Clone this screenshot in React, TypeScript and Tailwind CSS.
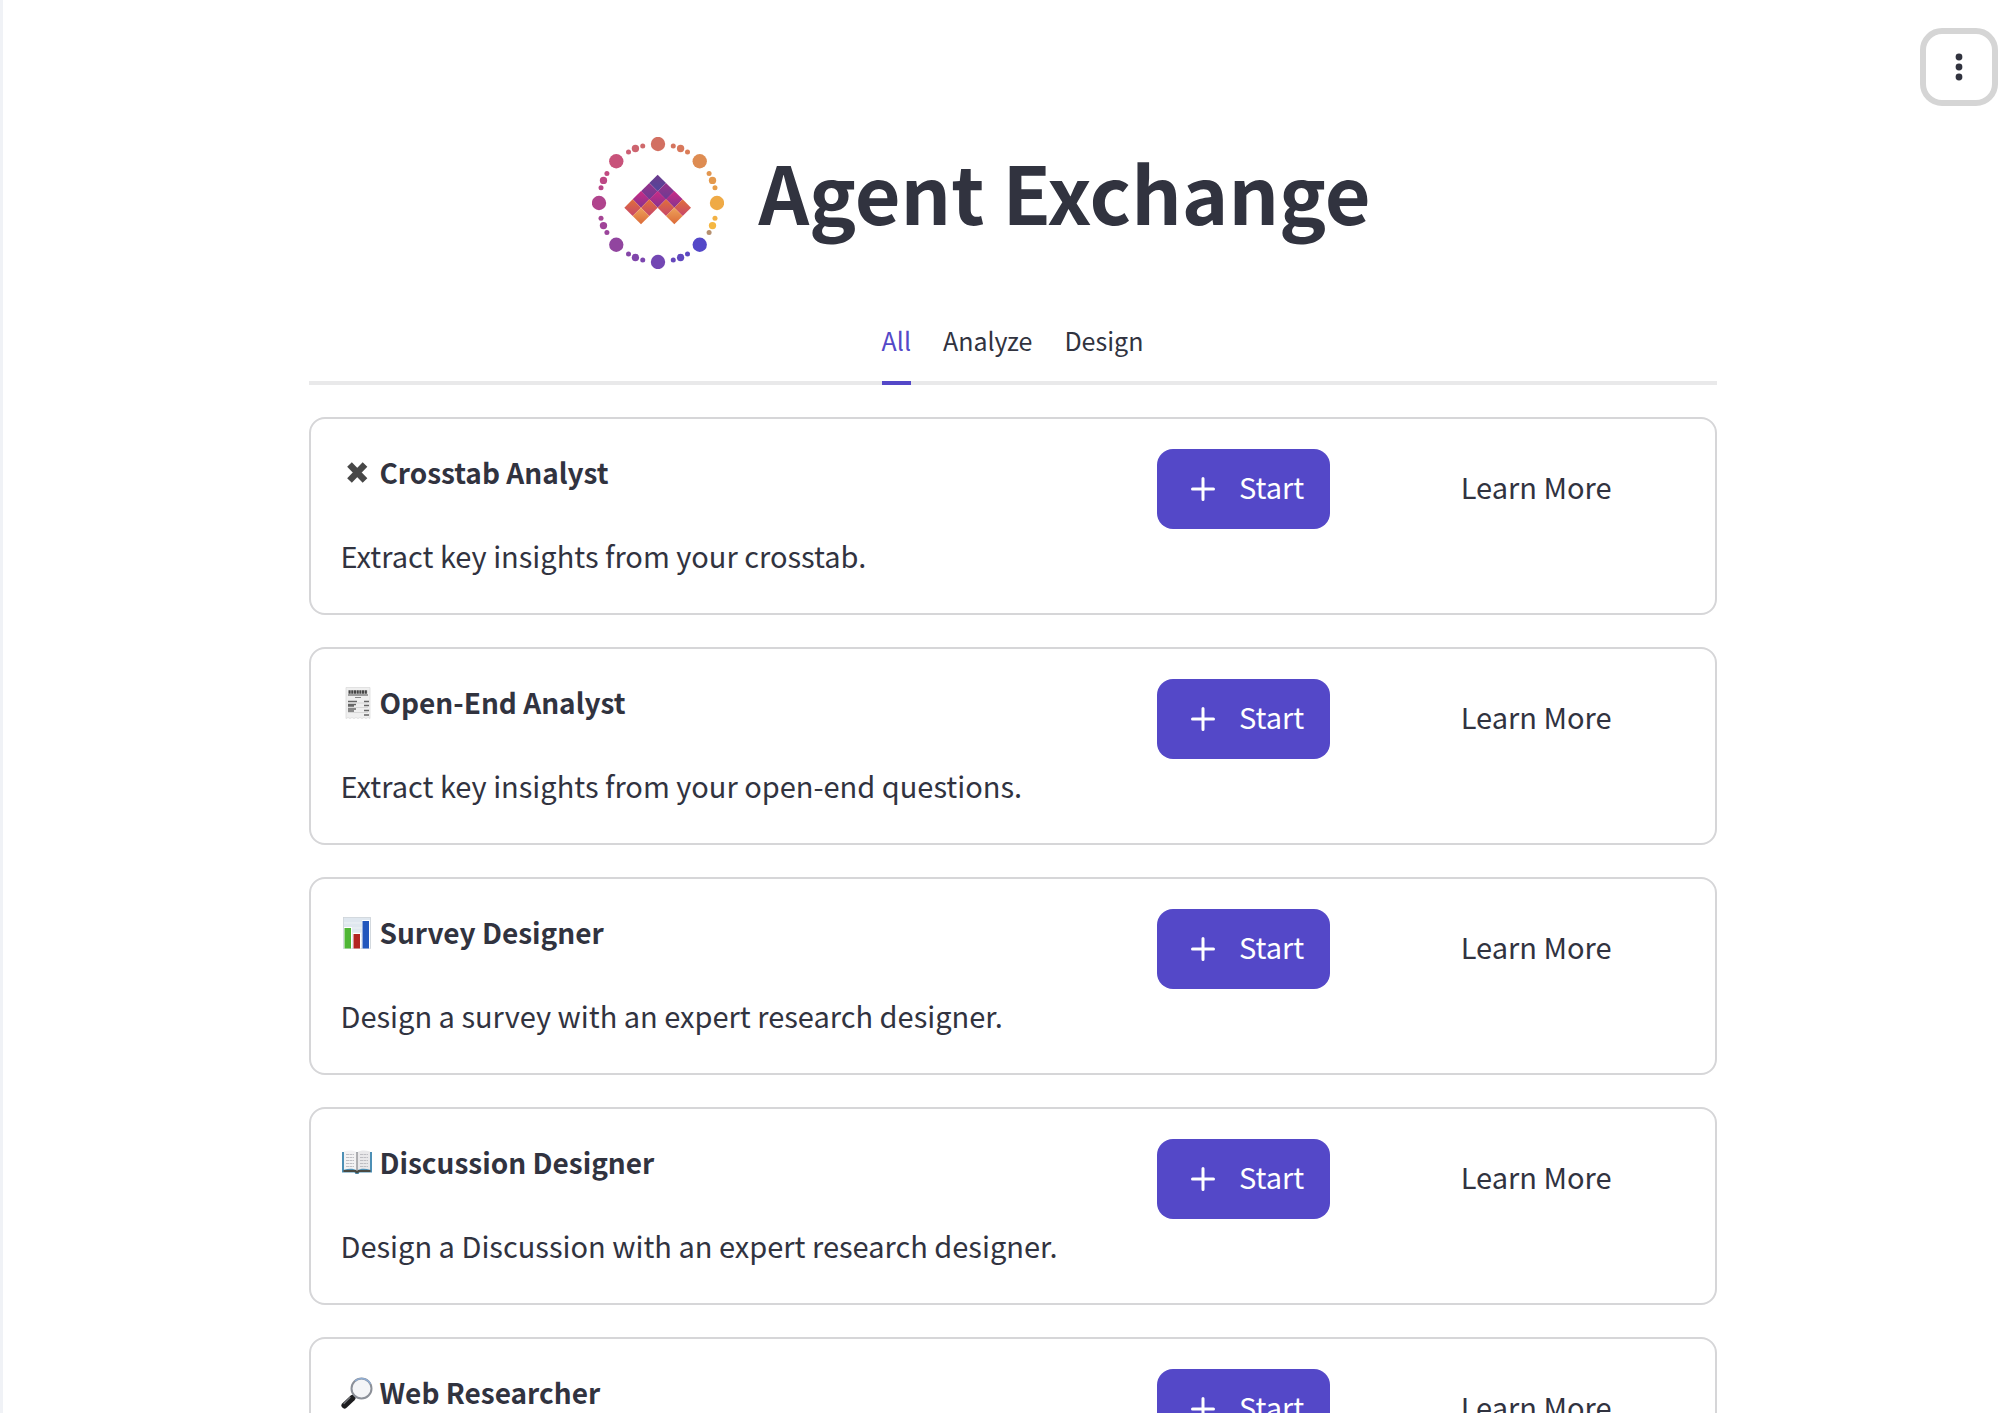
import React, { useState } from 'react';

type Category = 'Analyze' | 'Design';

interface Agent {
    name: string;
    description?: string;
    category: Category;
    icon: React.ReactNode;
}

const CrossIcon = () => (
    <svg viewBox="0 0 32 32" className="size-8 shrink-0" aria-hidden="true">
        <path d="M8.500 7.500 24 23.500M24 7.500 8.500 23.500" stroke="#474747" strokeWidth="6.500" fill="none" />
    </svg>
);

const ReceiptIcon = () => (
    <svg viewBox="0 0 32 32" className="size-8 shrink-0" aria-hidden="true">
        <path d="M5 0.5h24v31l-2-1-2 1-2-1-2 1-2-1-2 1-2-1-2 1-2-1-2 1-2-1-2 1z" fill="#efefef" stroke="#dcdcdc" strokeWidth="0.8" />
        <path d="M7.500 5h19" stroke="#444" strokeWidth="3.600" strokeDasharray="2.200 0.500" />
        <path d="M7 8h20" stroke="#666" strokeWidth="1.200" />
        <path d="M14 10.500h6" stroke="#888" strokeWidth="1" />
        <path d="M7 14.500h9M23 14.500h5M7 17.500h8M7 19h6M23 18.500h5M7 22h8M7 24h6M23 23.500h5M23 28h5" stroke="#666" strokeWidth="1.300" />
        <path d="M7 16h20M7 20.500h20M7 25.500h20" stroke="#ccc" strokeWidth="0.7" />
    </svg>
);

const ChartIcon = () => (
    <svg viewBox="0 0 32 32" className="size-8 shrink-0" aria-hidden="true">
        <rect x="2.500" y="0.5" width="27" height="31" fill="#dfe7ef" stroke="#cdd3d8" strokeWidth="0.8" />
        <path d="M3 6h26M3 11h26M3 16h26M3 21h26M3 26h26" stroke="#eef2f6" strokeWidth="1" />
        <rect x="3" y="10" width="8" height="21.5" fill="#fff" />
        <rect x="12" y="16" width="8" height="15.5" fill="#fff" />
        <rect x="21" y="3" width="8" height="28.5" fill="#fff" />
        <rect x="3.500" y="11" width="6.500" height="20.5" fill="#4fb635" />
        <rect x="12.500" y="17" width="6.500" height="14.5" fill="#b32421" />
        <rect x="21.500" y="4" width="6.500" height="27.5" fill="#2357bd" />
    </svg>
);

const BookIcon = () => (
    <svg viewBox="0 0 32 32" className="size-8 shrink-0" aria-hidden="true">
        <path d="M1 5h30v20.500H18.5l-1 1.500h-3l-1-1.500H1z" fill="#4c8fb5" />
        <path d="M2.5 23h27v2H18l-1 1.200h-2l-1-1.200H2.500z" fill="#4a4a42" />
        <path d="M3 4.500c5-1.500 10-1.200 13 1v18c-3-2-8-2.200-13-0.800z" fill="#f3f2f3" />
        <path d="M29 4.500c-5-1.500-10-1.200-13 1v18c3-2 8-2.200 13-0.800z" fill="#e9e8ea" />
        <path d="M16 5v19" stroke="#8b8b8f" strokeWidth="1.3" />
        <path d="M5 7.500h8M5 10.500h8M5 13.500h8M5 16.500h8M5 19.500h8M19 7.500h8M19 10.500h8M19 13.500h8M19 16.500h8M19 19.500h8" stroke="#b9b9be" strokeWidth="0.9" strokeDasharray="3 0.500" />
    </svg>
);

const MagnifierIcon = () => (
    <svg viewBox="0 0 32 32" className="size-8 shrink-0" aria-hidden="true">
        <path d="M10 21.500l4.500-4.500" stroke="#777" strokeWidth="2.500" />
        <path d="M3.500 28.500l8-7.500" stroke="#1d1d1f" strokeWidth="6" strokeLinecap="round" />
        <path d="M3 26.500l6-6" stroke="#75787c" strokeWidth="1.200" strokeLinecap="round" />
        <circle cx="20.500" cy="11.500" r="10" fill="#f4f5f7" stroke="#8c9098" strokeWidth="2" />
        <path d="M14 4a10 10 0 0 1 15.500 3" stroke="#8fadd3" strokeWidth="1.500" fill="none" />
    </svg>
);

const agents: Agent[] = [
    {
        name: 'Crosstab Analyst',
        description: 'Extract key insights from your crosstab.',
        category: 'Analyze',
        icon: <CrossIcon />,
    },
    {
        name: 'Open-End Analyst',
        description: 'Extract key insights from your open-end questions.',
        category: 'Analyze',
        icon: <ReceiptIcon />,
    },
    {
        name: 'Survey Designer',
        description: 'Design a survey with an expert research designer.',
        category: 'Design',
        icon: <ChartIcon />,
    },
    {
        name: 'Discussion Designer',
        description: 'Design a Discussion with an expert research designer.',
        category: 'Design',
        icon: <BookIcon />,
    },
    {
        name: 'Web Researcher',
        category: 'Analyze',
        icon: <MagnifierIcon />,
    },
];

// Clockwise from the top: one big dot, then three small ones
const ringColors = [
    ['#d27062', '#d5755f', '#d8785c', '#db7d58'],
    ['#de8c52', '#e2964f', '#e4994d', '#e79e4b'],
    ['#efaa46', '#f2b144', '#f5b742', '#b6906f'],
    ['#5448c8', '#5c48c2', '#6048be', '#6647bb'],
    ['#7347b3', '#7c46af', '#8046ab', '#8546a8'],
    ['#91459f', '#9b459b', '#a04498', '#a54494'],
    ['#b0448d', '#b94688', '#bd4985', '#c14b82'],
    ['#c8527a', '#cc5f74', '#cd646f', '#cf696b'],
];

// Diamonds of the mountain: centre x, centre y, row
const tiles = [
    [233, 174, 0],
    [208, 199, 1], [258, 199, 1],
    [183, 223, 2], [233, 223, 2], [283, 223, 2],
    [158, 248, 3], [208, 248, 3], [258, 248, 3], [308, 248, 3],
    [183, 273, 4], [283, 273, 4],
];

const tileColors = [
    ['#6d3a8c', '#50479c'],
    ['#98328a', '#6b3b94'],
    ['#cb2a85', '#85348f'],
    ['#e06f3a', '#c8466a'],
    ['#eda25a', '#dc6a38'],
];

const Logo = () => (
    <svg viewBox="36 36 396 396" className="size-[132px] shrink-0" role="img" aria-label="Agent Exchange logo">
        <defs>
            {tileColors.map(([from, to], row) => (
                <linearGradient key={row} id={`tile-${row}`} x1="0" y1="0" x2="0" y2="1">
                    <stop offset="0" stopColor={from} />
                    <stop offset="1" stopColor={to} />
                </linearGradient>
            ))}
        </defs>
        {ringColors.map((colors, i) =>
            colors.map((color, j) => {
                const offset = [0, 15, 22.5, 30][j];
                const angle = ((i * 45 + offset) * Math.PI) / 180;
                return (
                    <circle
                        key={`${i}-${j}`}
                        cx={234 + 177 * Math.sin(angle)}
                        cy={234 - 177 * Math.cos(angle)}
                        r={[21.5, 7.5, 11, 7.5][j]}
                        fill={color}
                    />
                );
            })
        )}
        {tiles.map(([x, y, row]) => (
            <path key={`${x}-${y}`} d={`M${x} ${y - 25}l25 25-25 25-25-25z`} fill={`url(#tile-${row})`} />
        ))}
    </svg>
);

const AgentCard: React.FC<{ agent: Agent }> = ({ agent }) => (
    <article className="grid grid-cols-[19fr_6fr_6fr] items-start gap-8 rounded-2xl border-2 border-[#d6d6d8] px-[30px] pt-[30px] pb-[34px]">
        <div className="flex flex-col gap-9 leading-[47px]">
            <h2 className="flex items-center gap-[7px] text-[28px] font-bold">
                {agent.icon}
                {agent.name}
            </h2>
            <p className="min-h-[47px]">{agent.description}</p>
        </div>
        <div>
            <button type="button" className="flex h-20 items-center gap-4 rounded-2xl bg-[#5448c8] px-[26px] text-white">
                <svg viewBox="0 0 40 40" className="size-10" aria-hidden="true">
                    <path d="M20 9.500v21M9.500 20h21" stroke="currentColor" strokeWidth="3" strokeLinecap="round" />
                </svg>
                <span className="pb-1">Start</span>
            </button>
        </div>
        <div>
            <button type="button" className="flex h-20 items-center px-6">
                <span className="pb-1">Learn More</span>
            </button>
        </div>
    </article>
);

const App = () => {
    const [tab, setTab] = useState<'All' | Category>('All');
    const visible = agents.filter((agent) => tab === 'All' || agent.category === tab);

    return (
        <div className="h-screen overflow-hidden border-l-3 border-[#f0f2f6] bg-white font-['Noto_Sans_CJK_SC','Noto_Sans',sans-serif] text-[29px] text-[#31333f]">
            <header className="flex justify-end pt-7 pr-4">
                <button
                    type="button"
                    aria-label="Main menu"
                    className="flex size-[78px] items-center justify-center rounded-[22px] border-6 border-[#d5d5d5]"
                >
                    <svg viewBox="0 0 40 40" className="size-10" fill="currentColor" aria-hidden="true">
                        <circle cx="20" cy="10" r="3.400" />
                        <circle cx="20" cy="20" r="3.400" />
                        <circle cx="20" cy="30" r="3.400" />
                    </svg>
                </button>
            </header>

            <main className="mx-auto max-w-[1416px] pt-[31px] pl-2">
                <div className="flex items-center justify-center gap-[34px] pr-[62px]">
                    <Logo />
                    <h1 className="pb-6 text-[79px] leading-[108px] font-bold">Agent Exchange</h1>
                </div>

                <div role="tablist" className="mt-8 flex justify-center gap-8 text-[25px] leading-10 shadow-[inset_0_-4px_#e9e9ea]">
                    {(['All', 'Analyze', 'Design'] as const).map((label) => (
                        <button
                            key={label}
                            type="button"
                            role="tab"
                            aria-selected={tab === label}
                            onClick={() => setTab(label)}
                            className={`border-b-4 pt-[19px] pb-[21px] ${tab === label ? 'border-[#5448c8] text-[#5448c8]' : 'border-transparent'}`}
                        >
                            {label}
                        </button>
                    ))}
                </div>

                <div className="mt-8 flex flex-col gap-8">
                    {visible.map((agent) => (
                        <AgentCard key={agent.name} agent={agent} />
                    ))}
                </div>
            </main>
        </div>
    );
};

export default App;
